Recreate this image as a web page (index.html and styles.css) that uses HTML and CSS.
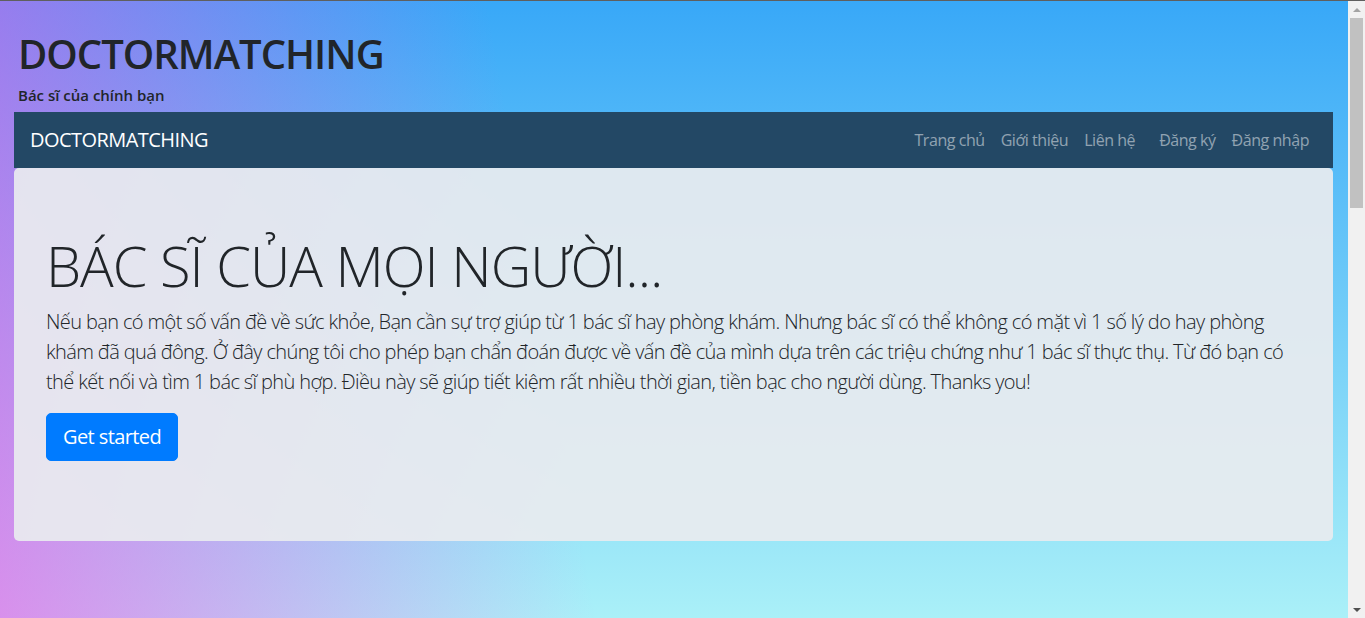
FILE: index.html
```html
<!DOCTYPE html>
<html lang="vi">
<head>
<meta charset="utf-8">
<title>DOCTORMATCHING</title>
<link rel="stylesheet" href="styles.css">
</head>
<body>
  <div class="page">
    <header class="site-header">
      <h1 class="site-title">DOCTORMATCHING</h1>
      <p class="site-tagline">Bác sĩ của chính bạn</p>
    </header>
    <nav class="navbar">
      <a class="brand" href="#">DOCTORMATCHING</a>
      <div class="nav-groups">
        <ul class="nav">
          <li><a href="#">Trang chủ</a></li>
          <li><a href="#">Giới thiệu</a></li>
          <li><a href="#">Liên hệ</a></li>
        </ul>
        <ul class="nav">
          <li><a href="#">Đăng ký</a></li>
          <li><a href="#">Đăng nhập</a></li>
        </ul>
      </div>
    </nav>
    <section class="jumbotron">
      <h2 class="display">BÁC SĨ CỦA MỌI NGƯỜI...</h2>
      <p class="lead">Nếu bạn có một số vấn đề về sức khỏe, Bạn cần sự trợ giúp từ 1 bác sĩ hay phòng khám. Nhưng bác sĩ có thể không có mặt vì 1 số lý do hay phòng khám đã quá đông. Ở đây chúng tôi cho phép bạn chẩn đoán được về vấn đề của mình dựa trên các triệu chứng như 1 bác sĩ thực thụ. Từ đó bạn có thể kết nối và tìm 1 bác sĩ phù hợp. Điều này sẽ giúp tiết kiệm rất nhiều thời gian, tiền bạc cho người dùng. Thanks you!</p>
      <p class="lead-action"><a class="btn" href="#">Get started</a></p>
    </section>
  </div>
  <div class="scrollbar" aria-hidden="true">
    <div class="sb-btn"><svg width="8" height="4" viewBox="0 0 8 4"><polygon points="0,4 4,0 8,4" fill="#a3a3a3"/></svg></div>
    <div class="sb-track"><div class="sb-thumb"></div></div>
    <div class="sb-btn"><svg width="8" height="4" viewBox="0 0 8 4"><polygon points="0,0 8,0 4,4" fill="#505050"/></svg></div>
  </div>
</body>
</html>
```
FILE: styles.css
```css
html, body {
  margin: 0;
  height: 100%;
}

body {
  display: flex;
  box-sizing: border-box;
  border-top: 1px solid #5f5f5f;
  overflow: hidden;
  font-family: "Open Sans", "Noto Sans", sans-serif;
  color: #212529;
}

.page {
  flex: 1;
  min-width: 0;
  padding: 0 15px 0 14px;
  background:
    linear-gradient(80deg, rgba(247, 80, 228, 0.6) 0%, rgba(247, 80, 228, 0) 41%),
    linear-gradient(to bottom, #38a8f8, #aaf0f8);
}

.site-header {
  padding: 29px 0 0 4px;
}

.site-title {
  margin: 0 0 6px;
  font-size: 40px;
  font-weight: 600;
  letter-spacing: -1px;
  line-height: 48px;
}

.site-tagline {
  margin: 0 0 6px;
  font-size: 15px;
  font-weight: 600;
  line-height: 22px;
}

.navbar {
  display: flex;
  align-items: center;
  justify-content: space-between;
  height: 56px;
  padding: 0 16px;
  background: #234865;
}

.brand {
  color: #fff;
  text-decoration: none;
  font-size: 20px;
  letter-spacing: -0.55px;
  line-height: 30px;
}

.nav-groups {
  display: flex;
  gap: 8px;
}

.nav {
  display: flex;
  list-style: none;
  margin: 0;
  padding: 0;
}

.nav a {
  display: block;
  padding: 0 8px;
  color: rgba(255, 255, 255, 0.5);
  text-decoration: none;
  font-size: 16px;
  letter-spacing: -0.45px;
  line-height: 24px;
}

.jumbotron {
  background: rgba(233, 236, 239, 0.92);
  border-radius: 5px;
  padding: 64px 32px;
}

.display {
  margin: 0 0 8px;
  font-size: 56px;
  font-weight: 300;
  letter-spacing: -1px;
  line-height: 1.2;
}

.lead {
  margin: 0 0 16px;
  font-size: 20px;
  font-weight: 300;
  letter-spacing: -0.62px;
  line-height: 30px;
}

.lead-action {
  display: flex;
  margin: 0 0 16px;
}

.btn {
  display: inline-block;
  padding: 8px 16px;
  border: 1px solid #007bff;
  border-radius: 5px;
  background: #007bff;
  color: #fff;
  text-decoration: none;
  font-size: 20px;
  letter-spacing: -0.6px;
  line-height: 30px;
}

.scrollbar {
  display: flex;
  flex-direction: column;
  width: 17px;
  background: #f1f1f1;
}

.sb-btn {
  display: flex;
  align-items: center;
  justify-content: center;
  height: 17px;
}

.sb-track {
  flex: 1;
  padding: 0 2px;
}

.sb-thumb {
  height: 190px;
  background: #c1c1c1;
}
```
